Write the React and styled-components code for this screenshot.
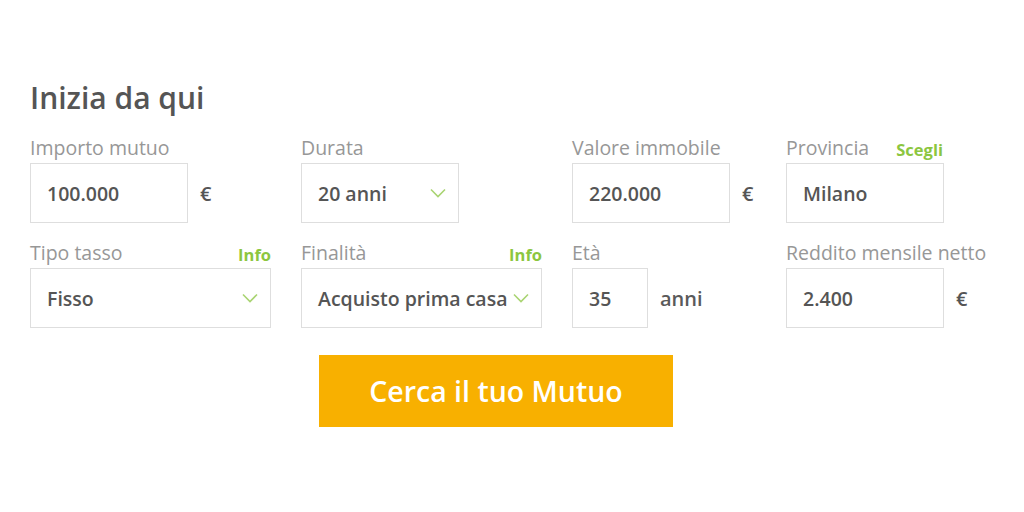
import styled, { createGlobalStyle } from 'styled-components'

const GlobalStyle = createGlobalStyle`
  html, body { margin: 0; padding: 0; background: #fff; }
  body { font-family: "Open Sans", "Liberation Sans", sans-serif; }
`

const Page = styled.div`
  width: 1024px;
  height: 512px;
  padding: 81px 0 0 30px;
  box-sizing: border-box;
`

const Title = styled.h1`
  margin: 0;
  font-size: 30px;
  line-height: 34px;
  font-weight: 600;
  color: #555;
`

const Grid = styled.div`
  display: grid;
  grid-template-columns: 241px 241px 184px 214px;
  column-gap: 30px;
  row-gap: 19px;
  margin-top: 22px;
`

const Field = styled.div`
  display: flex;
  flex-direction: column;
`

const LabelRow = styled.div`
  display: flex;
  justify-content: space-between;
  align-items: flex-end;
  height: 22px;
  margin-bottom: 4px;
  width: ${({ $w }) => $w || 'auto'};
`

const Label = styled.span`
  font-size: 19.5px;
  line-height: 22px;
  color: #979797;
  white-space: nowrap;
`

const Link = styled.span`
  font-size: 16.5px;
  font-weight: 700;
  color: #8cc63f;
  line-height: 20px;
  margin-bottom: -1px;
`

const Control = styled.div`
  display: flex;
  align-items: center;
  gap: ${({ $gap }) => $gap || 12}px;
`

const Box = styled.div`
  width: ${({ $w }) => $w}px;
  height: 60px;
  box-sizing: border-box;
  border: 1px solid #dedede;
  background: #fff;
  display: flex;
  align-items: center;
  justify-content: space-between;
  padding: 0 12px 0 16px;
  font-size: 19.5px;
  font-weight: 600;
  color: #555;
  white-space: nowrap;
`

const Unit = styled.span`
  font-size: 20px;
  font-weight: 600;
  color: #555;
`

const Word = styled.span`
  font-size: 20px;
  font-weight: 600;
  color: #5a5a5a;
`

const ButtonRow = styled.div`
  padding-left: 289px;
  margin-top: 27px;
`

const Button = styled.button`
  width: 354px;
  height: 72px;
  border: none;
  background: #f8b000;
  color: #fff;
  font-family: "Open Sans", "Liberation Sans", sans-serif;
  font-size: 28.5px;
  font-weight: 600;
  cursor: pointer;
`

const Chevron = () => (
  <svg width="16" height="10" viewBox="0 0 16 10" fill="none">
    <path d="M1 1.5 L8 8.5 L15 1.5" stroke="#a9d472" strokeWidth="1.6" />
  </svg>
)

export default function App() {
  return (
    <Page>
      <GlobalStyle />
      <Title>Inizia da qui</Title>
      <Grid>
        <Field>
          <LabelRow><Label>Importo mutuo</Label></LabelRow>
          <Control>
            <Box $w={158}>100.000</Box>
            <Unit>€</Unit>
          </Control>
        </Field>
        <Field>
          <LabelRow><Label>Durata</Label></LabelRow>
          <Control>
            <Box $w={158}>20 anni<Chevron /></Box>
          </Control>
        </Field>
        <Field>
          <LabelRow><Label>Valore immobile</Label></LabelRow>
          <Control>
            <Box $w={158}>220.000</Box>
            <Unit>€</Unit>
          </Control>
        </Field>
        <Field>
          <LabelRow $w="157px"><Label>Provincia</Label><Link>Scegli</Link></LabelRow>
          <Control>
            <Box $w={158}>Milano</Box>
          </Control>
        </Field>

        <Field>
          <LabelRow><Label>Tipo tasso</Label><Link>Info</Link></LabelRow>
          <Control>
            <Box $w={241}>Fisso<Chevron /></Box>
          </Control>
        </Field>
        <Field>
          <LabelRow><Label>Finalità</Label><Link>Info</Link></LabelRow>
          <Control>
            <Box $w={241}>Acquisto prima casa<Chevron /></Box>
          </Control>
        </Field>
        <Field>
          <LabelRow><Label>Età</Label></LabelRow>
          <Control>
            <Box $w={76}>35</Box>
            <Word>anni</Word>
          </Control>
        </Field>
        <Field>
          <LabelRow><Label>Reddito mensile netto</Label></LabelRow>
          <Control>
            <Box $w={158}>2.400</Box>
            <Unit>€</Unit>
          </Control>
        </Field>
      </Grid>
      <ButtonRow>
        <Button>Cerca il tuo Mutuo</Button>
      </ButtonRow>
    </Page>
  )
}
